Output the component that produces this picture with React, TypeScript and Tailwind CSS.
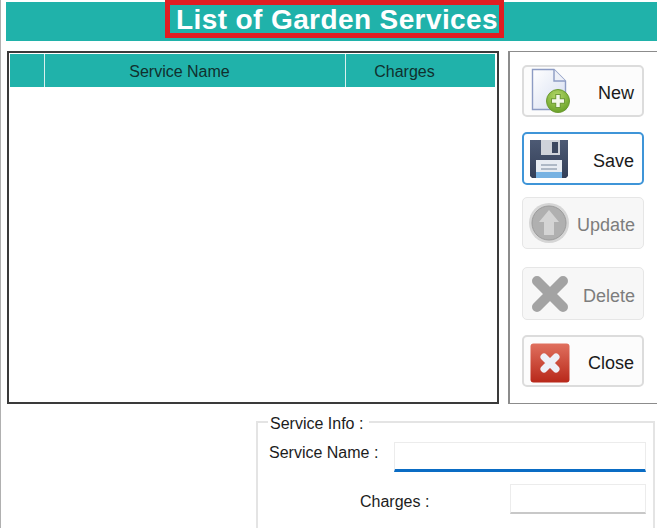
import React from "react";

const NewIcon = () => (
  <svg width="46" height="48" viewBox="0 0 46 48">
    <defs>
      <linearGradient id="pageFill" x1="0" y1="0" x2="1" y2="1">
        <stop offset="0" stopColor="#ffffff" />
        <stop offset="1" stopColor="#d5ddf0" />
      </linearGradient>
      <radialGradient id="plusFill" cx="0.45" cy="0.3" r="0.8">
        <stop offset="0" stopColor="#b5d96a" />
        <stop offset="1" stopColor="#5f9a1e" />
      </radialGradient>
    </defs>
    <path d="M3.5 1.5H25L36.5 13V41.5H3.5Z" fill="url(#pageFill)" stroke="#8d9cc4" strokeWidth="1.4" />
    <path d="M25 1.5V13H36.5" fill="#eef1f8" stroke="#8d9cc4" strokeWidth="1.4" />
    <circle cx="29" cy="33" r="11.5" fill="url(#plusFill)" stroke="#6c9a33" />
    <path d="M29 26V40M22 33H36" stroke="#6f9a3a" strokeWidth="5.5" />
    <path d="M29 27V39M23 33H35" stroke="#f4f8ec" strokeWidth="3.5" />
  </svg>
);

const SaveIcon = () => (
  <svg width="40" height="40" viewBox="0 0 40 40">
    <defs>
      <linearGradient id="diskFill" x1="0" y1="0" x2="0" y2="1">
        <stop offset="0" stopColor="#4d5a74" />
        <stop offset="1" stopColor="#333f58" />
      </linearGradient>
    </defs>
    <path d="M1 1H39V37L37 39H3L1 37Z" fill="url(#diskFill)" />
    <rect x="12" y="1" width="19" height="15" fill="#cfd3da" />
    <rect x="23" y="3" width="6" height="11" fill="#3c4860" />
    <rect x="7" y="21" width="26" height="18" fill="#e8edf3" />
    <rect x="7" y="33" width="26" height="6" fill="#77b2e2" />
    <path d="M12 26H28M12 30H28" stroke="#9aa8b8" strokeWidth="1.5" />
  </svg>
);

const UpdateIcon = () => (
  <svg width="42" height="42" viewBox="0 0 42 42">
    <circle cx="21" cy="21" r="20" fill="#d5d5d5" />
    <circle cx="21" cy="21" r="17" fill="#b0b0b0" stroke="#9c9c9c" />
    <path d="M21 8L31 20H26V33H16V20H11Z" fill="#d4d4d4" />
  </svg>
);

const DeleteIcon = () => (
  <svg width="38" height="38" viewBox="0 0 38 38">
    <path d="M6 6L32 32M32 6L6 32" stroke="#a3a3a3" strokeWidth="10" strokeLinecap="round" />
  </svg>
);

const CloseIcon = () => (
  <svg width="40" height="40" viewBox="0 0 40 40">
    <defs>
      <linearGradient id="closeFill" x1="0" y1="0" x2="0" y2="1">
        <stop offset="0" stopColor="#e0705e" />
        <stop offset="1" stopColor="#b8281a" />
      </linearGradient>
    </defs>
    <rect x="0.5" y="0.5" width="39" height="39" rx="3" fill="url(#closeFill)" />
    <path d="M14 14L26 26M26 14L14 26" stroke="#eef0f8" strokeWidth="7" strokeLinecap="round" />
  </svg>
);

interface IToolButton {
  icon: React.ReactNode;
  label: string;
  className: string;
  disabled?: boolean;
  focused?: boolean;
  iconClass: string;
}

const ToolButton = ({ icon, label, className, disabled, focused, iconClass }: IToolButton) => {
  const border = focused ? "border-2 border-[#3f95d8] bg-white" : disabled ? "border border-[#e6e6e6] bg-[#f7f7f7]" : "border-2 border-[#dcdcdc] bg-[#fcfcfc]";
  return (
    <div className={`w-[122px] rounded-[5px] flex items-center justify-between pr-[8px] ${border} ${className}`}>
      <div className={`flex items-center ${iconClass}`}>{icon}</div>
      <span className={`mt-[4px] text-[18px] leading-none ${disabled ? "text-[#7d7d7d]" : "text-[#1a1a1a]"}`}>{label}</span>
    </div>
  );
};

const App = () => {
  return (
    <div className="w-[657px] h-[528px] overflow-hidden bg-white border-l border-[#b0b0b0] font-['Liberation_Sans',Arial,sans-serif] text-[16px] text-[#1c1c1c]">
      <div className="ml-[5px] h-[39px] mt-[2px] bg-[#20b2aa] flex justify-center">
        <div className="-mt-[2px] h-[38px] w-[339px] ml-[6px] border-[5px] border-[#e01e22] pl-[6px] pt-[1px] flex items-center text-white font-bold text-[28px] tracking-[0.4px] whitespace-nowrap">
          List of Garden Services
        </div>
      </div>

      <div className="flex mt-[10px] ml-[6px] gap-[9px] h-[353px]">
        <div className="w-[492px] shrink-0 border-2 border-[#3a3a3a] pl-px pr-[2px] pt-px">
          <div className="flex h-[33px] bg-[#20b2aa] text-[#10302e]">
            <div className="w-[35px] border-r border-[#d8f0ee]" />
            <div className="w-[301px] border-r border-[#d8f0ee] flex items-center justify-center pr-[31px] pt-[2px]">Service Name</div>
            <div className="flex-1 flex items-center justify-center pr-[32px] pt-[2px]">Charges</div>
          </div>
        </div>

        <div className="w-[150px] shrink-0 border-2 border-r-0 border-[#8c8c8c] border-t border-b pl-[12px] pt-[13px]">
          <ToolButton icon={<NewIcon />} label="New" className="h-[52px]" iconClass="ml-[5px] mt-[2px]" />
          <ToolButton icon={<SaveIcon />} label="Save" className="h-[53px] mt-[15px]" iconClass="ml-[5px]" focused />
          <ToolButton icon={<UpdateIcon />} label="Update" className="h-[52px] mt-[12px]" iconClass="ml-[5px]" disabled />
          <ToolButton icon={<DeleteIcon />} label="Delete" className="h-[53px] mt-[18px]" iconClass="ml-[8px]" disabled />
          <ToolButton icon={<CloseIcon />} label="Close" className="h-[52px] mt-[15px]" iconClass="ml-[6px] mt-[3px]" />
        </div>
      </div>

      <fieldset className="ml-[255px] mt-[8px] w-[398px] h-[140px] border-2 border-[#e4e4e4] pl-[11px] pr-[7px]">
        <legend className="h-[20px] leading-[24px] w-[101px] pl-[2px] -ml-[1px]">Service Info :</legend>
        <div className="flex items-start justify-between mt-[10px]">
          <span className="mt-[1px] leading-[20px]">Service Name :</span>
          <div className="w-[252px] h-[30px] bg-white border border-[#ececec] border-b-[3px] border-b-[#0a6cc4]" />
        </div>
        <div className="flex items-start mt-[12px]">
          <span className="ml-[91px] w-[150px] mt-[8px] leading-[20px]">Charges :</span>
          <div className="w-[136px] h-[30px] bg-white border border-[#ececec] border-b-2 border-b-[#c8c8c8]" />
        </div>
      </fieldset>
    </div>
  );
};

export default App;
